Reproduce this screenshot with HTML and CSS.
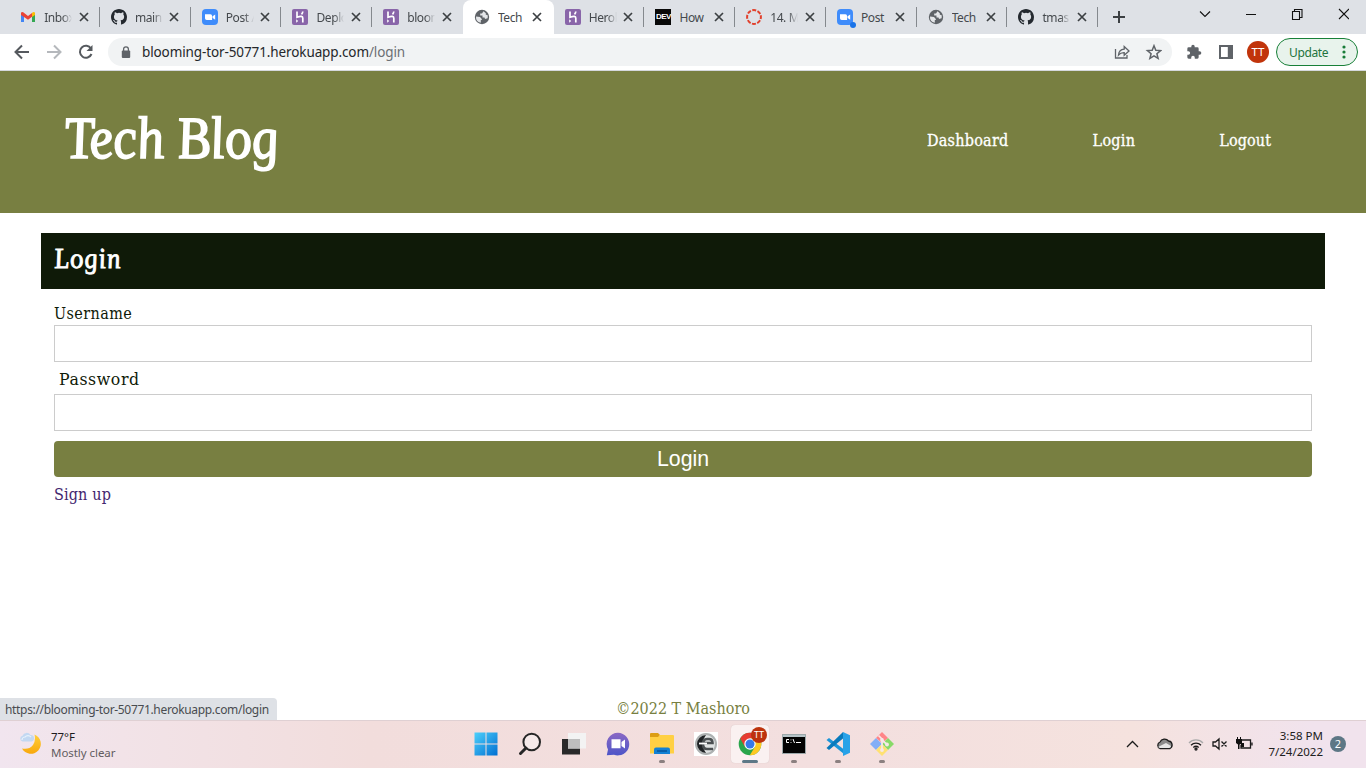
FILE: index.html
```
<!DOCTYPE html>
<html lang="en">
<head>
<meta charset="utf-8">
<title>Tech Blog</title>
<link rel="stylesheet" href="styles.css">
</head>
<body>
<svg class="defs" width="0" height="0">
  <symbol id="close" viewBox="0 0 10 10"><path d="M1 1l8 8M9 1L1 9" stroke="#3c4043" stroke-width="1.7"/></symbol>
  <symbol id="github" viewBox="0 0 16 16"><path fill="#24292f" d="M8 0C3.58 0 0 3.58 0 8c0 3.54 2.29 6.53 5.47 7.59.4.07.55-.17.55-.38v-1.49c-2.01.37-2.53-.49-2.69-.94-.09-.23-.48-.94-.82-1.13-.28-.15-.68-.52-.01-.53.63-.01 1.08.58 1.23.82.72 1.21 1.87.87 2.33.66.07-.52.28-.87.51-1.07-1.78-.2-3.64-.89-3.64-3.95 0-.87.31-1.59.82-2.15-.08-.2-.36-1.02.08-2.12 0 0 .67-.21 2.2.82a7.4 7.4 0 0 1 4 0c1.53-1.04 2.2-.82 2.2-.82.44 1.1.16 1.92.08 2.12.51.56.82 1.27.82 2.15 0 3.07-1.87 3.75-3.65 3.95.29.25.54.73.54 1.48v2.2c0 .21.15.46.55.38A8 8 0 0 0 16 8c0-4.42-3.58-8-8-8z"/></symbol>
  <symbol id="zoom" viewBox="0 0 16 16"><rect width="16" height="16" rx="4" fill="#3f8cfb"/><path fill="#fff" d="M3 5.2h5.4a1.7 1.7 0 0 1 1.7 1.7v4H4.7A1.7 1.7 0 0 1 3 9.200zM10.600 7.200L13.200 5.400v5.300l-2.600-1.800z"/></symbol>
  <symbol id="heroku" viewBox="0 0 16 16"><rect width="16" height="16" rx="2" fill="#8965a9"/><path d="M5 2.500V8.300Q10.800 6 10.800 9.200V13.500M10.800 2.500Q10.700 4 9.500 5.300" fill="none" stroke="#fff" stroke-width="1.700"/><path d="M4.200 10.300l2 1.700-2 1.700z" fill="#fff"/></symbol>
  <symbol id="globe" viewBox="0 0 16 16"><circle cx="8" cy="8" r="7.200" fill="#5f6368"/><path d="M9.500 2.200L8 4.500H6.200V6.500H8.500V8.500H10.500L11 10L13.600 9.200A6 6 0 0 0 13.500 6L11.800 5.800V4.200Z" fill="#e4e6e9"/><path d="M2 7.500L6 8L7.800 10V11H6.800V13.800A6 6 0 0 1 2 7.500Z" fill="#e4e6e9"/></symbol>
  <symbol id="gmail" viewBox="0 0 16 16"><path d="M1 4V13H4V7z" fill="#4285f4"/><path d="M12 7V13H15V4z" fill="#34a853"/><path d="M12 4V8L15 6V4Q14.600 2.400 12.800 3.300z" fill="#fbbc04"/><path d="M1 6V4Q1.400 2.400 3.200 3.300L8 7L12 4V7.800L8 10.800z" fill="#ea4335"/></symbol>
</svg>

<header class="tabs">
  <div class="tab"><svg class="fav"><use href="#gmail"/></svg><span class="name">Inbox</span><svg class="x"><use href="#close"/></svg></div>
  <div class="tab"><svg class="fav"><use href="#github"/></svg><span class="name">main</span><svg class="x"><use href="#close"/></svg></div>
  <div class="tab"><svg class="fav"><use href="#zoom"/></svg><span class="name">Post A</span><svg class="x"><use href="#close"/></svg></div>
  <div class="tab"><svg class="fav"><use href="#heroku"/></svg><span class="name">Deplo</span><svg class="x"><use href="#close"/></svg></div>
  <div class="tab plain"><svg class="fav"><use href="#heroku"/></svg><span class="name">bloom</span><svg class="x"><use href="#close"/></svg></div>
  <div class="tab active"><svg class="fav"><use href="#globe"/></svg><span class="name full">Tech</span><svg class="x"><use href="#close"/></svg></div>
  <div class="tab"><svg class="fav"><use href="#heroku"/></svg><span class="name">Herok</span><svg class="x"><use href="#close"/></svg></div>
  <div class="tab"><span class="fav dev">DEV</span><span class="name full">How</span><svg class="x"><use href="#close"/></svg></div>
  <div class="tab"><svg class="fav" viewBox="0 0 16 16"><circle cx="8" cy="8" r="6.900" fill="none" stroke="#e13f2b" stroke-width="2" stroke-dasharray="4 1.420" stroke-dashoffset="2"/></svg><span class="name">14. M</span><svg class="x"><use href="#close"/></svg></div>
  <div class="tab"><span class="fav dot"><svg class="fav"><use href="#zoom"/></svg></span><span class="name full">Post</span><svg class="x"><use href="#close"/></svg></div>
  <div class="tab"><svg class="fav"><use href="#globe"/></svg><span class="name full">Tech</span><svg class="x"><use href="#close"/></svg></div>
  <div class="tab"><svg class="fav"><use href="#github"/></svg><span class="name">tmas</span><svg class="x"><use href="#close"/></svg></div>
  <svg class="plus" viewBox="0 0 12 12"><path d="M6 0v12M0 6h12" stroke="#3c4043" stroke-width="2"/></svg>
  <svg class="window" viewBox="0 0 150 14"><g fill="none" stroke="#111" stroke-width="1.100"><path d="M1 4.500l5 5 5-5M47 7.500h10M140 2l10 10M150 2l-10 10"/><path d="M93.500 4.500h7v8h-7zM95.500 4.500V2.500h7.500v8h-2.500"/></g></svg>
</header>

<div class="toolbar">
  <svg class="nav-icons" viewBox="0 0 80 16"><g fill="none" stroke-width="2"><path d="M15 8H2M8 1.500L1.500 8L8 14.500" stroke="#55595e"/><path d="M33 8h13M40 1.500L46.500 8L40 14.500" stroke="#b5b8bc"/><path d="M77 4.500A6 6 0 1 0 77.500 10" stroke="#55595e"/></g><path d="M78.500 1v6h-6z" fill="#55595e"/></svg>
  <div class="address">
    <svg class="lock" viewBox="0 0 10 13"><rect x=".8" y="4.500" width="8.400" height="7.500" rx="1" fill="#5f6368"/><path d="M2.600 5V3.200a2.400 2.400 0 0 1 4.800 0V5" fill="none" stroke="#5f6368" stroke-width="1.300"/></svg>
    <span class="url">blooming-tor-50771.herokuapp.com<i>/login</i></span>
    <svg class="addr-icons" viewBox="0 0 48 16"><g fill="none" stroke="#5f6368" stroke-width="1.300"><path d="M1.500 5v9h11.500v-3M4.500 11Q5 5.500 10.200 5.200V2.500L15 7l-4.800 4.200V8.700Q6.500 8.600 4.500 11z"/><path d="M40 1.700l1.800 4.500 4.800.4-3.700 3.100 1.200 4.700-4.100-2.500-4.100 2.500 1.200-4.700-3.700-3.100 4.800-.4z" stroke-width="1.500"/></g></svg>
  </div>
  <svg class="puzzle" viewBox="0 0 24 24"><path fill="#5f6368" d="M20.500 11H19V7a2 2 0 0 0-2-2h-4V3.500a2.500 2.500 0 0 0-5 0V5H4a2 2 0 0 0-2 2v3.800h1.500a2.700 2.700 0 0 1 0 5.400H2V20a2 2 0 0 0 2 2h3.800v-1.500a2.700 2.700 0 0 1 5.400 0V22H17a2 2 0 0 0 2-2v-4h1.500a2.500 2.500 0 0 0 0-5z"/></svg>
  <svg class="panel" viewBox="0 0 14 14"><path fill="#5f6368" fill-rule="evenodd" d="M0 0h14v14H0zM2 2v10h6.800V2z"/></svg>
  <span class="avatar">TT</span>
  <div class="update"><span>Update</span><svg viewBox="0 0 4 14"><g fill="#187c38"><circle cx="2" cy="2" r="1.600"/><circle cx="2" cy="7" r="1.600"/><circle cx="2" cy="12" r="1.600"/></g></svg></div>
</div>

<main class="page">
  <div class="banner">
    <h1><span>Tech Blog</span></h1>
    <nav><a class="dash">Dashboard</a><a class="log">Login</a><a class="out">Logout</a></nav>
  </div>
  <section class="card">
    <h2><span>Login</span></h2>
    <form>
      <label class="user" for="u">Username</label>
      <input id="u" type="text">
      <label class="pass" for="p">Password</label>
      <input id="p" type="password">
      <button type="button">Login</button>
      <a class="signup">Sign up</a>
    </form>
  </section>
  <footer><span>©2022 T Mashoro</span></footer>
  <div class="status"><span>https://blooming-tor-50771.herokuapp.com/login</span></div>
</main>

<div class="taskbar">
  <svg class="moon" viewBox="0 0 24 24"><defs><linearGradient id="mg" x2="0" y2="1"><stop stop-color="#ffcf3c"/><stop offset="1" stop-color="#f8a80c"/></linearGradient></defs><path d="M15.500 2.500A10 10 0 1 1 3 16.500Q10 18 14 13Q17 8.500 15.500 2.500z" fill="url(#mg)"/><path d="M3.500 9.500a3 3 0 0 1 0-5.800A4.500 4.500 0 0 1 11.500 3a3.300 3.300 0 0 1 1 6.500z" fill="#c2d8f2"/><path d="M3 8a3 3 0 0 1 3-3 4 4 0 0 1 6 0" fill="none" stroke="#e7f1fb" stroke-width="1.200"/></svg>
  <div class="weather"><span>77°F</span><span class="sky">Mostly clear</span></div>
  <div class="apps">
    <div class="app"><svg viewBox="0 0 24 24"><defs><linearGradient id="wg" x2="1" y2="1"><stop stop-color="#4dd0fb"/><stop offset="1" stop-color="#006fd2"/></linearGradient></defs><path d="M.5.500H11.500V11.500H.5zM12.500.5H23.500V11.500H12.500zM.5 12.500H11.500V23.500H.5zM12.500 12.500H23.500V23.500H12.500z" fill="url(#wg)"/></svg></div>
    <div class="app"><svg viewBox="0 0 24 24"><circle cx="13.700" cy="10" r="8.300" fill="#f6eaea" stroke="#262626" stroke-width="2"/><path d="M8 16l-5.500 5.500" stroke="#262626" stroke-width="3" stroke-linecap="round"/></svg></div>
    <div class="app"><svg viewBox="0 0 24 24"><path d="M0 7h18v15.500H0z" fill="#292929"/><path d="M6 1h18v15.500H6z" fill="#f3f3f3"/><path d="M6 7h12v9.500H6z" fill="#bdbdbd"/></svg></div>
    <div class="app"><svg viewBox="0 0 24 24"><defs><linearGradient id="cg" x2="0" y2="1"><stop stop-color="#8b69c4"/><stop offset="1" stop-color="#4d55c8"/></linearGradient></defs><path d="M12 .8A11.300 11.300 0 1 1 8 22.700L.8 23.300 2 17.500A11.300 11.300 0 0 1 12 .8z" fill="url(#cg)"/><path d="M5.500 7.300h9v9h-9zM15.500 10l3.500-2.500v9L15.500 14z" fill="#fff"/></svg></div>
    <div class="app"><svg viewBox="0 0 24 24"><path d="M0 2Q0 1 1 1H8l2 2-2 3H0z" fill="#dc9e14"/><path d="M0 5h8l2-2h13q1 0 1 1v17.500H0z" fill="#ffd044"/><path d="M4 22v-4.500q0-2 2-2h12q2 0 2 2V22z" fill="#1381d4"/><path d="M7 19h10" stroke="#07569c" stroke-width="1.500"/></svg><b></b></div>
    <div class="app"><svg viewBox="0 0 24 24"><path d="M0 0h24v24H0z" fill="#fff"/><circle cx="12" cy="12" r="11" fill="#aeb2b2"/><circle cx="12" cy="12" r="9" fill="#e1e4e4"/><path d="M12 3a9 9 0 0 0 0 18l-3-5V8z" fill="#202426"/><path d="M19 17H13Q9 17 9 12T13 7H15Q18.500 7 18.500 11H9" fill="none" stroke="#4b5052" stroke-width="2.600"/><path d="M5 11.500h8" stroke="#fff" stroke-width="1.800"/></svg></div>
    <div class="app current"><svg viewBox="0 0 24 24"><circle cx="12" cy="12" r="11.300" fill="#29a64c"/><path d="M2.200 6.400A11.300 11.300 0 0 1 21.800 6.400H12L7 15z" fill="#e63c32"/><path d="M21.800 6.400A11.300 11.300 0 0 1 11.800 23.300L17 14.800 12 6.400z" fill="#fdc921"/><circle cx="12" cy="12" r="5.700" fill="#fff"/><circle cx="12" cy="12" r="4.500" fill="#3779e8"/></svg><em>TT</em><b></b></div>
    <div class="app"><svg viewBox="0 0 24 24"><path d="M.5 2.500h23v19H.5z" fill="#030303" stroke="#9ca8aa"/><path d="M1 3h22v2H1z" fill="#b6c4c8"/><path d="M7 7.500H4.500v3H7M9 7.500v.8M9 10v.8M11 7l1.500 4M14 10.500h5" fill="none" stroke="#fff"/></svg><b></b></div>
    <div class="app"><svg viewBox="0 0 24 24"><path d="M.5 8L3 6 18 17.500V22z" fill="#1b95d9"/><path d="M.5 16L17 0v6.500L3 18z" fill="#087abc"/><path d="M17 0l7 3.200v17.600L17 24z" fill="#28a2e8"/></svg><b></b></div>
    <div class="app"><svg viewBox="0 0 24 24"><path d="M12 0l6 6-6 5-6-5z" fill="#ff8588"/><path d="M6 6l6 6-6 6-6-6z" fill="#83aef6"/><path d="M18 6l6 6-6 6-6-6z" fill="#88da68"/><path d="M12 12l6 6-6 6-6-6z" fill="#ffe173"/><path d="M8.500 3.500L12 7v11M12 8l5 4.500" fill="none" stroke="#f7e8e8" stroke-width="1.700"/><circle cx="12" cy="18" r="1.900" fill="#f7e8e8"/><circle cx="17" cy="12.500" r="1.900" fill="#f7e8e8"/><circle cx="12" cy="8" r="1.900" fill="#f7e8e8"/></svg><b></b></div>
  </div>
  <svg class="tray" viewBox="0 0 130 18"><g fill="none" stroke="#1c1c1c" stroke-width="1.300"><path d="M1 12l5.500-5.500L12 12"/><path d="M34 13.500a3.500 3.500 0 0 1 0-6.500 5 5 0 0 1 8.500-1A4 4 0 0 1 44 13.500z" fill="#8b8b8b"/><path d="M32 12L40 8l5 3Q45 12.900 43 12.900H34z" fill="#e6e6e6" stroke="none"/><path d="M63 8a9.500 9.500 0 0 1 14 0" stroke="#aaa"/><path d="M65 10.300a7 7 0 0 1 10 0M67.300 12.500a4 4 0 0 1 5.400 0"/><circle cx="70" cy="14" r="1"/><path d="M87 7v4h2.500l3.500 3V4l-3.500 3zM95.500 6.500l5 5M100.500 6.500l-5 5"/><path d="M116 5h8.500v8H115v-3M126 7.500v3"/></g><path d="M110 4h6v4l-2 1.500h-2L110 8zM111 2h1v2h-1zM114 2h1v2h-1zM112 9h1.500v5H112zM115 8h3v4h-3z" fill="#111"/></svg>
  <div class="clock"><span class="time">3:58 PM</span><span class="date">7/24/2022</span></div>
  <span class="count">2</span>
</div>
</body>
</html>
```
FILE: styles.css
```
* { box-sizing: border-box; }
body { margin: 0; width: 1366px; height: 768px; overflow: hidden; display: flex; flex-direction: column; background: #fff; font-family: "Noto Sans", sans-serif; }
svg { display: block; flex: none; }
.defs { position: absolute; }
.tabs { height: 34px; background: #dee1e6; display: flex; align-items: center; padding-left: 9px; }
.tab { position: relative; width: 90.750px; height: 34px; padding-left: 11.200px; display: flex; align-items: center; flex: none; }
.tab::after { content: ""; position: absolute; right: 0; top: 7px; width: 1px; height: 20px; background: #85898e; }
.plain::after, .active::after { display: none; }
.active { background: #fff; border-radius: 8px 8px 0 0; }
.fav { width: 16px; height: 16px; flex: none; }
.dev { background: #090909; color: #fff; font: bold 8px/16px "Liberation Sans", sans-serif; text-align: center; letter-spacing: -.5px; }
.dot { position: relative; }
.dot::after { content: ""; position: absolute; right: -3px; bottom: -3px; width: 6px; height: 6px; border-radius: 50%; background: #1a73e8; }
.name { width: 28px; margin-left: 8px; overflow: hidden; white-space: nowrap; font-size: 12px; letter-spacing: -.4px; color: #45494d; -webkit-mask-image: linear-gradient(90deg, #000 65%, transparent); mask-image: linear-gradient(90deg, #000 65%, transparent); }
.full { -webkit-mask-image: none; mask-image: none; }
.x { width: 10px; height: 10px; margin-left: 6.500px; }
.plus { width: 12px; height: 12px; margin-left: 15px; }
.window { width: 150px; height: 14px; margin: -6px 0 0 74px; }
.toolbar { height: 37px; background: #fff; border-bottom: 1px solid #d5d8dc; display: flex; align-items: center; padding-left: 14px; }
.nav-icons { width: 80px; height: 16px; }
.address { width: 1064px; height: 28px; margin-left: 14px; border-radius: 14px; background: #f1f3f4; display: flex; align-items: center; padding: 0 10px 0 13px; }
.lock { width: 10px; height: 13px; }
.url { margin-left: 11px; flex: 1; font-size: 13.500px; letter-spacing: -.11px; color: #24272a; }
.url i { font-style: normal; color: #6b6f73; }
.addr-icons { width: 48px; height: 16px; }
.puzzle { width: 16px; height: 16px; margin-left: 14px; }
.panel { width: 14px; height: 14px; margin-left: 17px; }
.avatar { width: 22px; height: 22px; margin-left: 14px; border-radius: 50%; background: #c1340b; color: #fff; font-size: 11.500px; line-height: 22px; text-align: center; }
.update { width: 82px; height: 28px; margin-left: 7px; border: 1px solid #188038; border-radius: 14px; background: #e8f3ec; color: #22743d; font-size: 12px; display: flex; align-items: center; padding-left: 12px; letter-spacing: -.35px; }
.update svg { width: 4px; height: 14px; margin-left: auto; margin-right: 11px; }

.page { position: relative; height: 649px; display: flex; flex-direction: column; font-family: "DejaVu Serif Condensed", "DejaVu Serif", serif; font-stretch: condensed; color: #0f1a08; }
.banner { height: 142px; flex: none; background: #787f41; display: flex; align-items: center; justify-content: space-between; padding: 0 95px 0 64px; color: #fff; }
h1, h2 { margin: 0; font-family: "Liberation Serif", serif; font-style: italic; font-weight: normal; }
h1 { font-size: 57px; line-height: 60px; margin-top: -9px; -webkit-text-stroke: 1.600px #fff; }
h1 span, h2 span { display: inline-block; transform-origin: 0 50%; }
h1 span { transform: skewX(7deg) scale(.94, 1.05); }
nav { display: flex; margin-top: -3px; font-size: 16px; gap: 84px; -webkit-text-stroke: .3px #fff; }
.dash { letter-spacing: .25px; }
.log { letter-spacing: .3px; }
.out { letter-spacing: .1px; margin-right: -.1px; }
.card { margin: 20px 41px 0; }
h2 { height: 56px; background: #0f1a08; color: #fff; padding: 0 13px; font-size: 29px; line-height: 51px; letter-spacing: 1.200px; -webkit-text-stroke: .9px #fff; }
h2 span { transform: skewX(7deg) scaleX(.91); }
form { padding: 15px 13px 0; display: flex; flex-direction: column; }
label { font-size: 16px; line-height: 20px; height: 21px; letter-spacing: .4px; }
.pass { margin: 8px 0 0 5px; height: 24px; font-size: 17.500px; line-height: 19px; letter-spacing: .6px; }
input { height: 37px; width: 100%; border: 1px solid #ccc; border-radius: 0; margin: 0; background: #fff; }
button { height: 36px; margin: 10px 0 8px; padding: 0; border: 0; border-radius: 4px; background: #787f41; color: #fff; font: 21.300px "Liberation Sans", Arial, sans-serif; }
.signup { color: #43276f; font-size: 16px; line-height: 20px; letter-spacing: .15px; }
footer { margin-top: auto; height: 23px; line-height: 24px; text-align: center; color: #787f41; font-size: 16px; }
.status { position: absolute; left: 0; bottom: 0; width: 277px; height: 22px; padding-left: 5px; background: #dee1e6; border-top-right-radius: 4px; color: #494c50; font: 12px/23px "Noto Sans", sans-serif; white-space: nowrap; letter-spacing: -.33px; }
.taskbar { height: 48px; flex: none; border-top: 1px solid #dfd0d3; background: linear-gradient(90deg, #f1e5ef 0, #f2e3e8 9%, #f2dddc 27%, #f3dfdf 60%, #f5e2de 83%, #f1e3ed 96%); display: flex; align-items: center; }
.moon { width: 24px; height: 24px; margin: -2px 0 0 19px; }
.weather { width: 100px; margin: 1px 0 0 8px; display: flex; flex-direction: column; font-size: 11.500px; line-height: 16px; color: #1d1b1c; letter-spacing: -.05px; }
.sky { color: #625c60; }
.apps { display: flex; gap: 6px; margin: -1px 0 0 316px; }
.app { position: relative; width: 38px; height: 38px; border-radius: 4px; display: flex; justify-content: center; padding-top: 7px; }
.app svg { width: 24px; height: 24px; }
.app b { position: absolute; left: 16px; bottom: 0; width: 6px; height: 3px; border-radius: 2px; background: #8b8080; }
.current { background: #faf1f1; box-shadow: 0 0 1px #cabbbb; }
.current b { left: 11px; width: 16px; background: #5d7887; }
.current em { position: absolute; right: 2px; top: 2px; width: 16px; height: 16px; border-radius: 50%; background: #bd330d; color: #fff; font: 9px/16px "Noto Sans", sans-serif; text-align: center; }
.tray { width: 130px; height: 18px; margin: -1px 0 0 225px; }
.clock { width: 70px; margin: -1px 0 0 -3px; display: flex; flex-direction: column; text-align: right; font-size: 11.500px; line-height: 16px; color: #202020; }
.time { letter-spacing: 0; }
.count { width: 16px; height: 16px; margin: -2px 0 0 7px; border-radius: 50%; background: #5d7785; color: #fff; font-size: 11px; line-height: 16px; text-align: center; }
```
